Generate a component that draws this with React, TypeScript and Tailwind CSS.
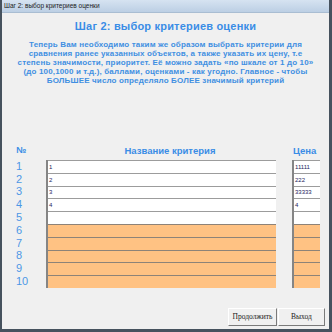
import React from "react";

const names = ["1", "2", "3", "4", "", "", "", "", "", ""];
const prices = ["11111", "222", "33333", "4", "", "", "", "", "", ""];

function Cell({ text, orange }: { text: string; orange: boolean }) {
  return (
    <div
      className={
        "h-[12.8px] flex items-center pl-[1px] border-t text-[6px] leading-none text-[#24245e] " +
        (orange ? "bg-[#ffc283] border-[#8e8378]" : "bg-white border-[#9c9c9c]")
      }
    >
      {text}
    </div>
  );
}

export default function App() {
  return (
    <div
      className="w-[332px] h-[332px] flex flex-col border-l-2 border-r-[3px] border-b-[3px] border-[#46525e] bg-[#f0f0f0] overflow-hidden"
      style={{ fontFamily: '"Liberation Sans", Arial, sans-serif' }}
    >
      <div className="h-[13px] shrink-0 flex items-center pl-[2px] bg-gradient-to-b from-[#d6e3f1] to-[#bccfe4] border-b border-[#a9bdd2] text-[6.5px] text-[#1b1b1b] leading-none">
        Шаг 2: выбор критериев оценки
      </div>
      <div className="flex-1 flex flex-col bg-[#f0f0f0]">
        <div className="mt-[7px] h-[13px] text-center text-[11px] font-bold leading-[13px] text-[#3a8de6] tracking-[0.2px]">
          Шаг 2: выбор критериев оценки
        </div>
        <div className="mt-[7px] text-center text-[8px] font-bold leading-[9px] text-[#3f8fe2] tracking-[0.15px] whitespace-nowrap">
          Теперь Вам необходимо таким же образом выбрать критерии для
          <br />
          сравнения ранее указанных объектов, а также указать их цену, т.е
          <br />
          степень значимости, приоритет. Её можно задать «по шкале от 1 до 10»
          <br />
          (до 100,1000 и т.д.), баллами, оценками - как угодно. Главное - чтобы
          <br />
          БОЛЬШЕЕ число определяло БОЛЕЕ значимый критерий
        </div>
        <div className="mt-[58px] flex">
          <div className="w-[44px] shrink-0 flex flex-col">
            <div className="h-[16px] mb-[1px] flex items-center pl-[14px] text-[9px] font-bold text-[#3a8de6]">
              №
            </div>
            {names.map((_, i) => (
              <div
                key={i}
                className="h-[12.8px] flex items-center pl-[14px] text-[11px] leading-none text-[#4d97e6]"
              >
                {i + 1}
              </div>
            ))}
          </div>
          <div className="w-[230px] shrink-0 flex flex-col">
            <div className="h-[16px] mb-[1px] flex items-center justify-center pl-[18px] text-[9.5px] font-bold text-[#3a8de6]">
              Название критерия
            </div>
            <div className="border-l-2 border-[#858585]">
              {names.map((t, i) => (
                <Cell key={i} text={t} orange={i >= 5} />
              ))}
            </div>
          </div>
          <div className="w-[16px] shrink-0" />
          <div className="w-[28px] shrink-0 flex flex-col">
            <div className="h-[16px] mb-[1px] flex items-center pl-[1px] text-[9.5px] font-bold text-[#3a8de6]">
              Цена
            </div>
            <div className="border-l-2 border-[#858585]">
              {prices.map((t, i) => (
                <Cell key={i} text={t} orange={i >= 5} />
              ))}
            </div>
          </div>
        </div>
        <div className="mt-[20px] flex justify-end pr-[4px] gap-[1px]">
          <div
            className="w-[49px] h-[18px] flex items-center justify-center bg-[#f0f0f0] border border-t-white border-l-white border-r-[#7a7a7a] border-b-[#7a7a7a] text-[7.5px] text-[#1a1a1a]"
            style={{ fontFamily: '"Liberation Serif", "Times New Roman", serif' }}
          >
            Продолжить
          </div>
          <div
            className="w-[47px] h-[18px] flex items-center justify-center bg-[#f0f0f0] border border-t-white border-l-white border-r-[#7a7a7a] border-b-[#7a7a7a] text-[7.5px] text-[#1a1a1a]"
            style={{ fontFamily: '"Liberation Serif", "Times New Roman", serif' }}
          >
            Выход
          </div>
        </div>
      </div>
    </div>
  );
}
